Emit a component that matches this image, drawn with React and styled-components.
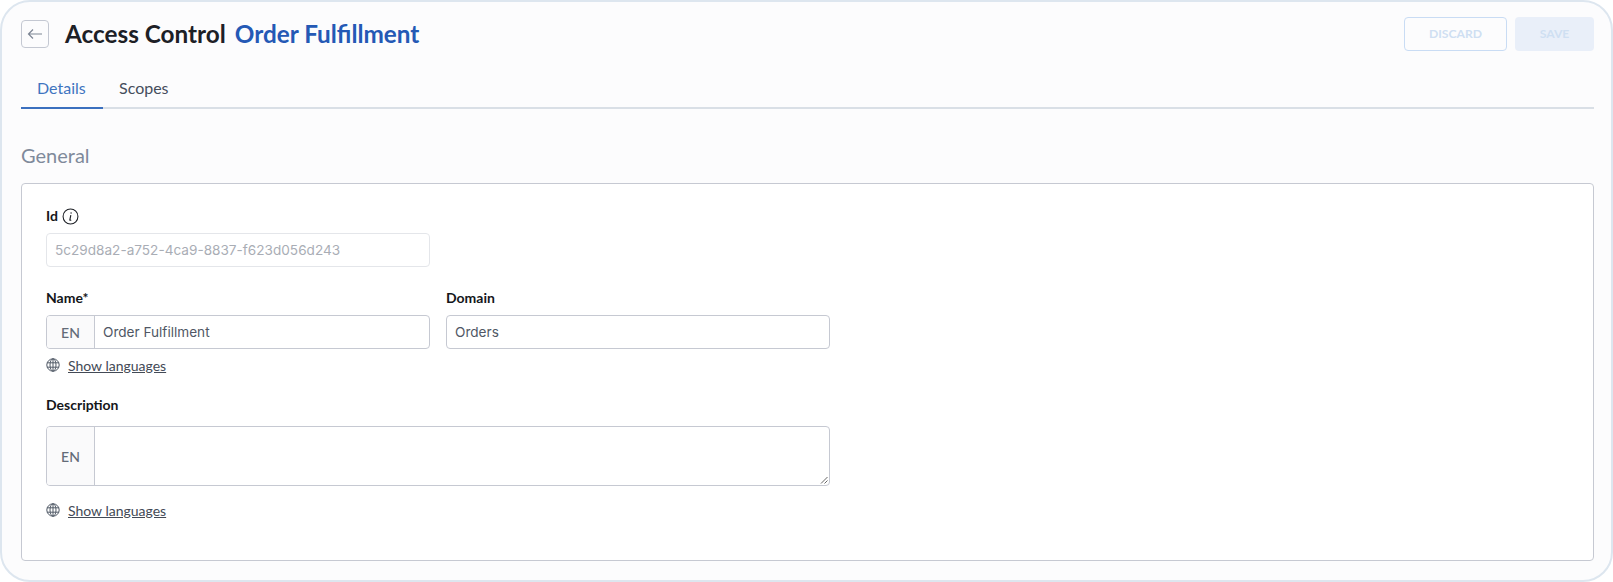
import React from 'react'
import styled, { createGlobalStyle } from 'styled-components'

const Global = createGlobalStyle`
html,body{
	margin:0;
	padding:0;
	background:#fff;
}
*{
	box-sizing:border-box;
}
`

const ArrowLeft = () => (
	<svg width="16" height="12" viewBox="0 0 16 12" fill="none" stroke="#7c8594" strokeWidth="1.2">
		<path d="M15 6H1.5M6 1.5L1.5 6L6 10.5" />
	</svg>
)

const InfoIcon = () => (
	<svg width="17" height="17" viewBox="0 0 16 16" fill="none" stroke="#1d2026" strokeWidth="1">
		<circle cx="8" cy="8" r="7" />
		<path d="M8.6 4.2v.9" strokeWidth="1.4" />
		<path d="M8.3 6.8L7.4 11.2q0 .7 1.3 0" strokeWidth="1.1" />
	</svg>
)

const GlobeIcon = () => (
	<svg width="14" height="14" viewBox="0 0 14 14" fill="none" stroke="#515a67" strokeWidth="1">
		<circle cx="7" cy="7" r="6.2" />
		<ellipse cx="7" cy="7" rx="3" ry="6.2" />
		<path d="M7 .8v12.4M1 4.8h12M1 9.2h12" />
	</svg>
)

const ShowLanguages = () => (
	<Languages>
		<GlobeIcon />
		<LanguagesLink>Show languages</LanguagesLink>
	</Languages>
)

const App = () => (
	<Page>
		<Global />
		<Header>
			<TitleRow>
				<BackButton><ArrowLeft /></BackButton>
				<Title>Access Control</Title>
				<Subtitle>Order Fulfillment</Subtitle>
			</TitleRow>
			<Actions>
				<Discard>DISCARD</Discard>
				<Save>SAVE</Save>
			</Actions>
		</Header>
		<Tabs>
			<Tab $active>Details</Tab>
			<Tab>Scopes</Tab>
		</Tabs>
		<Section>General</Section>
		<Card>
			<Field>
				<Label>Id <InfoIcon /></Label>
				<ReadOnly>5c29d8a2-a752-4ca9-8837-f623d056d243</ReadOnly>
			</Field>
			<Row>
				<Field>
					<Label>Name*</Label>
					<Input>
						<Prefix>EN</Prefix>
						<Value>Order Fulfillment</Value>
					</Input>
					<ShowLanguages />
				</Field>
				<Field>
					<Label>Domain</Label>
					<Input>
						<Value>Orders</Value>
					</Input>
				</Field>
			</Row>
			<Field>
				<Label>Description</Label>
				<TextArea>
					<Prefix>EN</Prefix>
					<Grip viewBox="0 0 8 8" width="8" height="8" stroke="#666" strokeWidth="1">
						<path d="M1 7.5L7.5 1M4.5 7.5L7.5 4.5" />
					</Grip>
				</TextArea>
				<ShowLanguages />
			</Field>
		</Card>
	</Page>
)

const Page = styled.div`
width:1613px;
height:582px;
padding:18px 17px 0 19px;
background:#fcfcfd;
border:2px solid #dde6ef;
border-radius:30px;
font-family:"Lato",sans-serif;
overflow:hidden;
`
const Header = styled.div`
display:flex;
justify-content:space-between;
align-items:flex-start;
height:28px;
`
const TitleRow = styled.div`
display:flex;
align-items:center;
height:28px;
`
const BackButton = styled.div`
width:28px;
height:28px;
border:1px solid #c4c8d2;
border-radius:4px;
display:flex;
align-items:center;
justify-content:center;
margin-right:16px;
`
const Title = styled.h1`
margin:0 9px 0 0;
padding-bottom:2px;
font-size:24.3px;
font-weight:700;
color:#1d2026;
`
const Subtitle = styled.span`
padding-bottom:2px;
font-size:24.3px;
font-weight:700;
color:#2459b5;
`
const Actions = styled.div`
display:flex;
gap:8px;
margin-top:-3px;
`
const Discard = styled.div`
width:103px;
height:34px;
padding-bottom:2px;
border:1px solid #c9dcf4;
border-radius:4px;
display:flex;
align-items:center;
justify-content:center;
font-size:12.2px;
font-weight:700;
color:#cfdff2;
`
const Save = styled(Discard)`
width:79px;
border:none;
background:#e9eff9;
`
const Tabs = styled.div`
display:flex;
margin-top:17px;
border-bottom:2px solid #d9dfe6;
height:44px;
`
const Tab = styled.div`
width:${p => (p.$active ? '82px' : 'auto')};
padding:2px 16px 0;
height:44px;
display:flex;
align-items:center;
font-size:16px;
color:${p => (p.$active ? '#3f74c0' : '#454d5c')};
border-bottom:2px solid ${p => (p.$active ? '#3b70bf' : 'transparent')};
`
const Section = styled.h2`
margin:31px 0 0 0;
height:30px;
line-height:30px;
font-size:20px;
font-weight:400;
color:#7f8a9b;
`
const Card = styled.div`
margin-top:13px;
height:378px;
background:#fff;
border:1px solid #c6c9d2;
border-radius:4px;
padding:22px 24px;
display:flex;
flex-direction:column;
gap:21px;
`
const Row = styled.div`
display:flex;
gap:16px;
`
const Field = styled.div`
width:384px;
display:flex;
flex-direction:column;
`
const Label = styled.label`
height:20px;
line-height:20px;
margin-bottom:7px;
display:flex;
align-items:center;
gap:4px;
font-size:14px;
font-weight:700;
color:#14161a;
`
const ReadOnly = styled.div`
height:34px;
padding:0 8px;
border:1px solid #e4e6ea;
border-radius:4px;
line-height:32px;
font-family:"Inter",sans-serif;
font-size:13.6px;
color:#a9adb5;
white-space:nowrap;
`
const Input = styled.div`
height:34px;
display:flex;
border:1px solid #c6c9d2;
border-radius:4px;
overflow:hidden;
`
const Prefix = styled.div`
width:48px;
flex:none;
background:#fafafb;
border-right:1px solid #c6c9d2;
display:flex;
align-items:center;
justify-content:center;
font-size:14px;
font-weight:500;
color:#636b78;
`
const Value = styled.div`
padding:0 8px;
line-height:32px;
font-family:"Inter",sans-serif;
font-size:13.6px;
color:#505765;
`
const TextArea = styled(Input)`
position:relative;
width:784px;
height:60px;
margin:4px 0 8px;
`
const Grip = styled.svg`
position:absolute;
right:1px;
bottom:1px;
`
const Languages = styled.div`
display:flex;
align-items:center;
gap:8px;
margin-top:7px;
height:18px;
`
const LanguagesLink = styled.span`
font-size:14px;
color:#434a56;
text-decoration:underline;
`

export default App
